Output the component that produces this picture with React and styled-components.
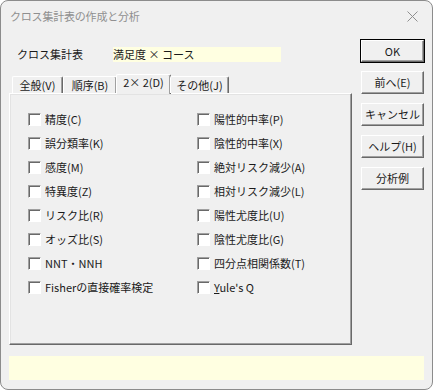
import React from 'react';
import styled, { createGlobalStyle } from 'styled-components';

const GlobalStyle = createGlobalStyle`
  html, body {
    margin: 0;
    padding: 0;
    background: #ffffff;
  }
  body {
    font-family: "Noto Sans CJK JP", "Liberation Sans", sans-serif;
    font-size: 11px;
    line-height: 13px;
    color: #1a1a1a;
  }
`;

const Window = styled.div`
  width: 433px;
  height: 390px;
  box-sizing: border-box;
  border: 1px solid #8c8c8c;
  border-radius: 8px;
  background: #f0f0f0;
  display: flex;
  flex-direction: column;
  overflow: hidden;
`;

const TitleBar = styled.div`
  height: 31px;
  display: flex;
  align-items: center;
  justify-content: space-between;
  padding: 0 14px 0 9px;
  color: #8f8f8f;
  font-size: 11px;
  letter-spacing: -0.2px;
`;

const Body = styled.div`
  padding: 7px 8px 0 8px;
  display: flex;
  flex-direction: column;
`;

const Main = styled.div`
  display: flex;
  gap: 9px;
`;

const LeftColumn = styled.div`
  width: 343px;
  display: flex;
  flex-direction: column;
`;

const LabelRow = styled.div`
  height: 31px;
  display: flex;
  align-items: center;
  padding-left: 8px;
`;

const Label = styled.span`
  width: 96px;
`;

const ValueBox = styled.div`
  width: 168px;
  height: 15px;
  line-height: 15px;
  background: #ffffe1;
  white-space: pre;
`;

const TabStrip = styled.div`
  display: flex;
  align-items: flex-end;
  height: 23px;
  padding-left: 3px;
  position: relative;
  z-index: 1;
`;

const Tab = styled.div`
  box-sizing: border-box;
  width: ${(p) => p.$w}px;
  height: ${(p) => (p.$active ? 20 : 17)}px;
  margin: ${(p) => (p.$active ? '0 -1px -1px' : '0')};
  padding: ${(p) => (p.$active ? '0 0 4px' : '0')};
  display: flex;
  align-items: center;
  justify-content: center;
  background: #f0f0f0;
  border-top: 1px solid #ffffff;
  border-left: 1px solid #ffffff;
  border-right: 1px solid #696969;
  box-shadow: inset -1px 0 0 #a0a0a0;
  border-radius: 2px 2px 0 0;
  white-space: nowrap;
`;

const Panel = styled.div`
  box-sizing: border-box;
  height: 252px;
  border-top: 1px solid #ffffff;
  border-left: 1px solid #ffffff;
  border-right: 1px solid #696969;
  border-bottom: 1px solid #696969;
  box-shadow: inset -1px -1px 0 #a0a0a0, inset 1px 1px 0 #e3e3e3;
  padding: 13px 0 0 18px;
  display: grid;
  grid-template-columns: 169px 1fr;
  grid-auto-rows: 24px;
  align-content: start;
`;

const CheckRow = styled.label`
  display: flex;
  align-items: center;
  gap: 4px;
  white-space: nowrap;
`;

const Box = styled.span`
  width: 13px;
  height: 13px;
  box-sizing: border-box;
  background: #ffffff;
  border-top: 1px solid #a0a0a0;
  border-left: 1px solid #a0a0a0;
  border-right: 1px solid #ffffff;
  border-bottom: 1px solid #ffffff;
  box-shadow: inset 1px 1px 0 #696969;
  flex: none;
`;

const Underline = styled.span`
  text-decoration: underline;
`;

const ButtonColumn = styled.div`
  width: 63px;
  display: flex;
  flex-direction: column;
  gap: 9px;
`;

const Button = styled.div`
  box-sizing: border-box;
  height: 23px;
  display: flex;
  align-items: center;
  justify-content: center;
  background: #f0f0f0;
  border-top: 1px solid #ffffff;
  border-left: 1px solid #ffffff;
  border-right: 1px solid #696969;
  border-bottom: 1px solid #696969;
  box-shadow: inset -1px -1px 0 #a0a0a0;
  outline: ${(p) => (p.$default ? '1px solid #000' : 'none')};
  white-space: nowrap;
  ${(p) => p.$default && 'margin-top: 1px; height: 22px;'}
`;

const StatusBar = styled.div`
  margin-top: 11px;
  height: 24px;
  background: #ffffe1;
`;

const leftItems = [
  '精度(C)',
  '誤分類率(K)',
  '感度(M)',
  '特異度(Z)',
  'リスク比(R)',
  'オッズ比(S)',
  'NNT・NNH',
  'Fisherの直接確率検定',
];

const rightItems = [
  '陽性的中率(P)',
  '陰性的中率(X)',
  '絶対リスク減少(A)',
  '相対リスク減少(L)',
  '陽性尤度比(U)',
  '陰性尤度比(G)',
  '四分点相関係数(T)',
];

const tabs = [
  { label: '全般(V)', w: 51 },
  { label: '順序(B)', w: 54 },
  { label: '2× 2(D)', w: 55, active: true },
  { label: 'その他(J)', w: 59 },
];

const CloseIcon = () => (
  <svg width="11" height="11" viewBox="0 0 11 11">
    <path d="M0.5 0.5 L10.5 10.5 M10.5 0.5 L0.5 10.5" stroke="#8f8f8f" strokeWidth="1" fill="none" />
  </svg>
);

function App() {
  const cells = [];
  leftItems.forEach((l, i) => {
    cells.push(
      <CheckRow key={'l' + i}>
        <Box />
        {l}
      </CheckRow>
    );
    cells.push(
      <CheckRow key={'r' + i}>
        <Box />
        {rightItems[i] ? (
          rightItems[i]
        ) : (
          <span>
            <Underline>Y</Underline>ule's Q
          </span>
        )}
      </CheckRow>
    );
  });

  return (
    <>
      <GlobalStyle />
      <Window>
        <TitleBar>
          <span>クロス集計表の作成と分析</span>
          <CloseIcon />
        </TitleBar>
        <Body>
          <Main>
            <LeftColumn>
              <LabelRow>
                <Label>クロス集計表</Label>
                <ValueBox>満足度 × コース</ValueBox>
              </LabelRow>
              <TabStrip>
                {tabs.map((t) => (
                  <Tab key={t.label} $w={t.w} $active={t.active}>
                    {t.label}
                  </Tab>
                ))}
              </TabStrip>
              <Panel>{cells}</Panel>
            </LeftColumn>
            <ButtonColumn>
              <Button $default>OK</Button>
              <Button>前へ(E)</Button>
              <Button>キャンセル</Button>
              <Button>ヘルプ(H)</Button>
              <Button>分析例</Button>
            </ButtonColumn>
          </Main>
          <StatusBar />
        </Body>
      </Window>
    </>
  );
}

export default App;
